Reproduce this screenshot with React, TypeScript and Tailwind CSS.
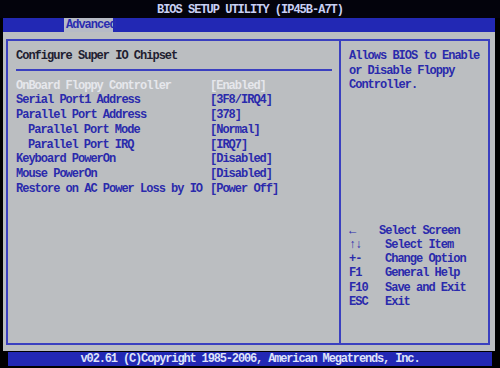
const items = [
  { label: 'OnBoard Floppy Controller', value: '[Enabled]', sel: true },
  { label: 'Serial Port1 Address', value: '[3F8/IRQ4]' },
  { label: 'Parallel Port Address', value: '[378]' },
  { label: 'Parallel Port Mode', value: '[Normal]', indent: true },
  { label: 'Parallel Port IRQ', value: '[IRQ7]', indent: true },
  { label: 'Keyboard PowerOn', value: '[Disabled]' },
  { label: 'Mouse PowerOn', value: '[Disabled]' },
  { label: 'Restore on AC Power Loss by IO', value: '[Power Off]' },
]

const keys = [
  { k: '←', d: 'Select Screen', first: true },
  { k: '↑↓', d: 'Select Item' },
  { k: '+-', d: 'Change Option' },
  { k: 'F1', d: 'General Help' },
  { k: 'F10', d: 'Save and Exit' },
  { k: 'ESC', d: 'Exit' },
]

const App = () => {
  return (
    <div
      className="w-[500px] h-[368px] bg-black flex flex-col overflow-hidden whitespace-pre text-[12px] font-bold tracking-[-1px]"
      style={{ fontFamily: '"Liberation Mono", "DejaVu Sans Mono", monospace' }}
    >
      {/* title */}
      <div className="h-[18px] pt-[3px] leading-[15px] text-center text-[#c9d0f4] bg-[#03030c]">
        BIOS SETUP UTILITY (IP45B-A7T)
      </div>

      {/* tab bar */}
      <div className="h-[14px] ml-[3px] mr-[5px] bg-[#2228b4] flex">
        <div className="ml-[61px] w-[49px] bg-[#b6bac6] text-[#2a2cb0] leading-[15px] pl-[2px]">Advanced</div>
      </div>

      {/* main */}
      <div className="h-[319px] ml-[3px] mr-[5px] bg-[#bbbec1] pt-[7px] pl-[3px] pr-[5px] pb-[6px] flex">
        <div className="flex-1 flex border-[2px] border-[#3a40c0]">
          <div className="w-[333px] border-r-[2px] border-[#3a40c0] pl-[8px] pt-[8px]">
            <div className="leading-[14.7px] text-[#1e2030]">Configure Super IO Chipset</div>
            <div className="mt-[5px] w-[316px] h-[2px] bg-[#3a40c0]" />
            <div className="mt-[8px] flex flex-col leading-[14.7px]">
              {items.map(it => (
                <div key={it.label} className={`flex ${it.sel ? 'text-[#e6e7ec]' : 'text-[#2a2aac]'}`}>
                  <span className={`w-[194px] ${it.indent ? 'pl-[12px]' : ''}`}>{it.label}</span>
                  <span>{it.value}</span>
                </div>
              ))}
            </div>
          </div>
          <div className="flex-1 pl-[8px] pt-[8px] text-[#2a2aac]">
            <div className="leading-[14.5px]">
              <div>Allows BIOS to Enable</div>
              <div>or Disable Floppy</div>
              <div>Controller.</div>
            </div>
            <div className="mt-[131px] leading-[14.3px]">
              {keys.map(r => (
                <div key={r.k} className="flex">
                  <span className={r.first ? 'w-[30px]' : 'w-[36px]'}>{r.k}</span>
                  <span>{r.d}</span>
                </div>
              ))}
            </div>
          </div>
        </div>
      </div>

      {/* footer */}
      <div className="mt-[1px] h-[14px] ml-[8px] w-[484px] bg-[#2228b4] text-center leading-[15px] text-[#dde2fa] tracking-[-1.15px]">
        v02.61 (C)Copyright 1985-2006, American Megatrends, Inc.
      </div>
    </div>
  )
}

export default App
